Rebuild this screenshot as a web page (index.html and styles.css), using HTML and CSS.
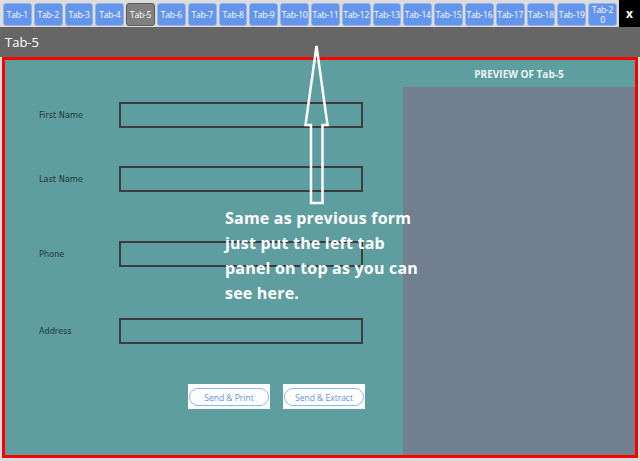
FILE: index.html
```html
<!DOCTYPE html>
<html>
<head>
<meta charset="utf-8">
<link rel="stylesheet" href="styles.css">
</head>
<body>
<div class="tabbar">
  <div class="tab">Tab-1</div>
  <div class="tab">Tab-2</div>
  <div class="tab">Tab-3</div>
  <div class="tab">Tab-4</div>
  <div class="tab active">Tab-5</div>
  <div class="tab">Tab-6</div>
  <div class="tab">Tab-7</div>
  <div class="tab">Tab-8</div>
  <div class="tab">Tab-9</div>
  <div class="tab">Tab-10</div>
  <div class="tab">Tab-11</div>
  <div class="tab">Tab-12</div>
  <div class="tab">Tab-13</div>
  <div class="tab">Tab-14</div>
  <div class="tab">Tab-15</div>
  <div class="tab">Tab-16</div>
  <div class="tab">Tab-17</div>
  <div class="tab">Tab-18</div>
  <div class="tab">Tab-19</div>
  <div class="tab">Tab-2<br>0</div>
  <div class="close">x</div>
</div>
<div class="titlebar">Tab-5</div>
<div class="frame">
  <div class="form">
    <div class="field"><label>First Name</label><input class="input" type="text"></div>
    <div class="field"><label>Last Name</label><input class="input" type="text"></div>
    <div class="field spaced"><label>Phone</label><input class="input" type="text"></div>
    <div class="field spaced"><label>Address</label><input class="input" type="text"></div>
    <div class="actions">
      <button class="btn"><span class="pill">Send &amp; Print</span></button>
      <button class="btn"><span class="pill">Send &amp; Extract</span></button>
    </div>
  </div>
  <div class="preview">
    <div class="preview-title">PREVIEW OF Tab-5</div>
    <div class="preview-body"></div>
  </div>
</div>
<svg class="arrow" width="640" height="461" viewBox="0 0 640 461">
  <polygon points="316.5,46 327.5,125 322.5,125 322.5,203 311,203 311,125 305.5,125" fill="none" stroke="#fff" stroke-width="2.5" stroke-linejoin="miter"/>
</svg>
<div class="note">Same as previous form<br>just put the left tab<br>panel on top as you can<br>see here.</div>
</body>
</html>
```
FILE: styles.css
```css
body {
  margin: 0;
  width: 640px;
  height: 461px;
  overflow: hidden;
  position: relative;
  background: #dcdcdc;
  font-family: "Open Sans", sans-serif;
}
.tabbar {
  display: grid;
  grid-template-columns: repeat(20, 1fr) 21px;
  column-gap: 2px;
  padding-left: 3px;
  height: 27px;
  align-items: end;
  background: #dcdcdc;
}
.tab {
  height: 23px;
  margin-bottom: 1px;
  box-sizing: border-box;
  display: flex;
  align-items: center;
  justify-content: center;
  text-align: center;
  background: #6495ed;
  border: 1px solid #97b4e6;
  border-radius: 3px;
  color: #fff;
  font-size: 8.5px;
  letter-spacing: -0.2px;
  line-height: 1.15;
  white-space: nowrap;
}
.tab.active {
  background: #808080;
  border-color: #5a5a5a;
}
.close {
  height: 27px;
  background: #000;
  color: #fff;
  font-weight: bold;
  font-size: 12px;
  display: flex;
  align-items: center;
  justify-content: center;
}
.titlebar {
  height: 30px;
  background: #666;
  color: #fff;
  font-size: 13px;
  padding-left: 5px;
  display: flex;
  align-items: center;
}
.frame {
  margin: 0 2px;
  height: 395px;
  border: 3px solid #f00;
  background: #5f9ea0;
  display: grid;
  grid-template-columns: 398px 1fr;
}
.form {
  padding: 42px 0 0 34px;
  display: flex;
  flex-direction: column;
}
.field {
  display: flex;
  align-items: center;
}
.field + .field {
  margin-top: 38px;
}
.field.spaced {
  margin-top: 49px;
}
.field.spaced + .field.spaced {
  margin-top: 51px;
}
.field label {
  width: 80px;
  font-family: "DejaVu Sans", sans-serif;
  font-size: 8.2px;
  color: #1f3636;
}
.input {
  width: 244px;
  height: 26px;
  box-sizing: border-box;
  border: 2px solid #3c3c3c;
  background: transparent;
  margin: 0;
  padding: 0;
}
.actions {
  margin-top: 40px;
  padding-left: 149px;
  display: flex;
  gap: 13px;
}
.btn {
  width: 82px;
  height: 25px;
  box-sizing: border-box;
  padding: 4px 1px 3px;
  margin: 0;
  border: none;
  background: #fff;
}
.pill {
  display: flex;
  height: 100%;
  box-sizing: border-box;
  align-items: center;
  justify-content: center;
  border: 1px solid #8ab4f8;
  border-radius: 9px;
  color: #5f8fe6;
  font-family: "Open Sans", sans-serif;
  font-size: 8.5px;
}
.preview {
  display: flex;
  flex-direction: column;
}
.preview-title {
  height: 27px;
  display: flex;
  align-items: center;
  justify-content: center;
  color: #eaf4f4;
  font-weight: bold;
  font-size: 10px;
}
.preview-body {
  flex: 1;
  background: #708090;
}
.arrow {
  position: absolute;
  left: 0;
  top: 0;
  pointer-events: none;
}
.note {
  position: absolute;
  left: 225px;
  top: 206px;
  color: #fff;
  font-weight: bold;
  font-size: 16px;
  letter-spacing: 0.2px;
  line-height: 25px;
}
```
